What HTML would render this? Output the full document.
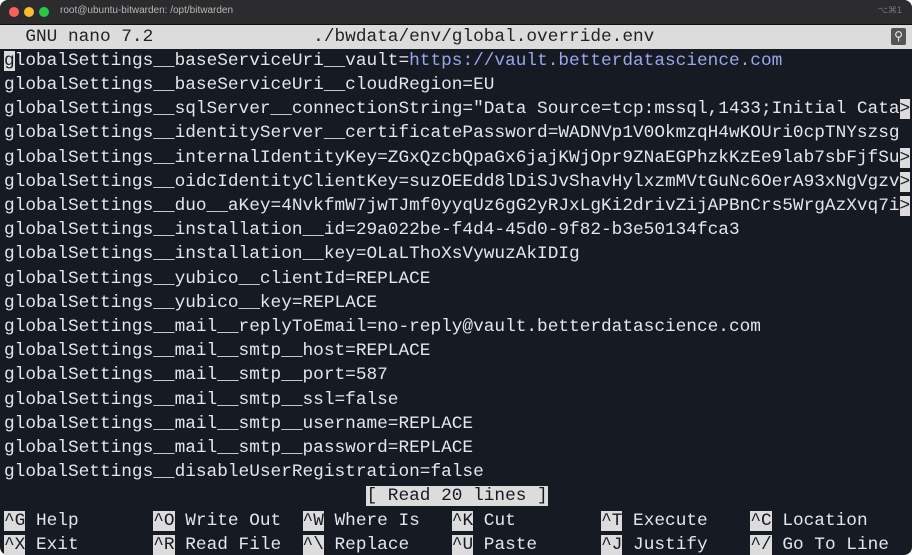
<!DOCTYPE html>
<html><head><meta charset="utf-8"><style>
html,body{margin:0;padding:0;background:#fff;width:920px;height:555px;overflow:hidden}
.win{position:absolute;left:0;top:0;width:912px;height:555px;background:#161a22;border-radius:8px;overflow:hidden}
.tb{position:absolute;left:0;top:0;width:100%;height:24px;background:#2c2c2e;border-bottom:1px solid #111}
.dot{position:absolute;top:7px;width:10px;height:10px;border-radius:50%}
.tt{position:absolute;left:60px;top:5px;font:10px "Liberation Sans",sans-serif;color:#b8b8b8}
.kb{position:absolute;right:10px;top:5px;font:9px "Liberation Sans",sans-serif;color:#777}
.r{position:absolute;left:4px;height:24px;line-height:24px;font-family:"Liberation Mono",monospace;font-size:17.77px;color:#e4e6ea;white-space:pre}
.hdr{position:absolute;left:0;top:25px;width:100%;height:24px;background:#dcdcdc}
.inv{background:#dcdcdc;color:#161a22}
.u{color:#9aa6ec}
</style></head><body>
<div class="win">
<div class="tb"><div class="dot" style="left:9px;background:#fe5f57"></div><div class="dot" style="left:24px;background:#febc2e"></div><div class="dot" style="left:39px;background:#28c840"></div><div class="tt">root@ubuntu-bitwarden: /opt/bitwarden</div><div class="kb">⌥⌘1</div></div>
<div class="hdr"></div>
<div class="r" style="top:25px;color:#222">  GNU nano 7.2               ./bwdata/env/global.override.env</div>
<div style="position:absolute;left:891px;top:28px;width:15px;height:17px;background:#555;border-radius:2px;color:#eee;font:12px 'DejaVu Sans';text-align:center;line-height:17px">⚲</div>
<div class="r" style="top:49px"><span class="inv">g</span>lobalSettings__baseServiceUri__vault=<span class="u">https://vault.betterdatascience.com</span></div>
<div class="r" style="top:73px">globalSettings__baseServiceUri__cloudRegion=EU</div>
<div class="r" style="top:97px">globalSettings__sqlServer__connectionString="Data Source=tcp:mssql,1433;Initial Cata<span class="inv">&gt;</span></div>
<div class="r" style="top:121px">globalSettings__identityServer__certificatePassword=WADNVp1V0OkmzqH4wKOUri0cpTNYszsg</div>
<div class="r" style="top:146px">globalSettings__internalIdentityKey=ZGxQzcbQpaGx6jajKWjOpr9ZNaEGPhzkKzEe9lab7sbFjfSu<span class="inv">&gt;</span></div>
<div class="r" style="top:170px">globalSettings__oidcIdentityClientKey=suzOEEdd8lDiSJvShavHylxzmMVtGuNc6OerA93xNgVgzv<span class="inv">&gt;</span></div>
<div class="r" style="top:194px">globalSettings__duo__aKey=4NvkfmW7jwTJmf0yyqUz6gG2yRJxLgKi2drivZijAPBnCrs5WrgAzXvq7i<span class="inv">&gt;</span></div>
<div class="r" style="top:218px">globalSettings__installation__id=29a022be-f4d4-45d0-9f82-b3e50134fca3</div>
<div class="r" style="top:242px">globalSettings__installation__key=OLaLThoXsVywuzAkIDIg</div>
<div class="r" style="top:267px">globalSettings__yubico__clientId=REPLACE</div>
<div class="r" style="top:291px">globalSettings__yubico__key=REPLACE</div>
<div class="r" style="top:315px">globalSettings__mail__replyToEmail=no-reply@vault.betterdatascience.com</div>
<div class="r" style="top:339px">globalSettings__mail__smtp__host=REPLACE</div>
<div class="r" style="top:363px">globalSettings__mail__smtp__port=587</div>
<div class="r" style="top:388px">globalSettings__mail__smtp__ssl=false</div>
<div class="r" style="top:412px">globalSettings__mail__smtp__username=REPLACE</div>
<div class="r" style="top:436px">globalSettings__mail__smtp__password=REPLACE</div>
<div class="r" style="top:460px">globalSettings__disableUserRegistration=false</div>
<div class="r" style="top:484px">                                  <span class="inv">[ Read 20 lines ]</span></div>
<div class="r" style="top:509px"><span class="inv">^G</span> Help       <span class="inv">^O</span> Write Out  <span class="inv">^W</span> Where Is   <span class="inv">^K</span> Cut        <span class="inv">^T</span> Execute    <span class="inv">^C</span> Location</div>
<div class="r" style="top:533px"><span class="inv">^X</span> Exit       <span class="inv">^R</span> Read File  <span class="inv">^\</span> Replace    <span class="inv">^U</span> Paste      <span class="inv">^J</span> Justify    <span class="inv">^/</span> Go To Line</div>
</div>
</body></html>
